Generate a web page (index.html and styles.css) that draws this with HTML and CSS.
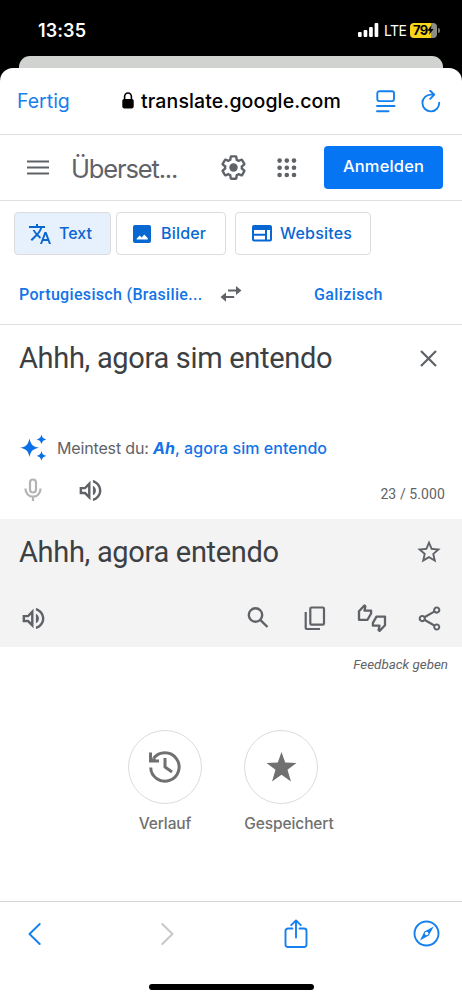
FILE: index.html
```html
<!DOCTYPE html>
<html lang="de">
<head>
<meta charset="utf-8">
<title>Google Übersetzer</title>
<link rel="stylesheet" href="styles.css">
</head>
<body>
<div class="phone">
  <header class="status">
    <span class="clock">13:35</span>
    <svg class="signal" width="21" height="14" viewBox="0 0 21 14" fill="#fff"><rect x="0" y="9" width="3.7" height="5" rx="1"/><rect x="5.6" y="7" width="3.7" height="7" rx="1"/><rect x="11.1" y="4" width="3.7" height="10" rx="1"/><rect x="16.6" y="0" width="3.7" height="14" rx="1"/></svg>
    <span class="lte">LTE</span>
    <span class="battery"><span class="level">79</span><svg class="bolt" width="7" height="10" viewBox="0 0 7 10"><path d="M4.5 0 .3 5.7h2.5L2 10l4.6-6H4z"/></svg></span>
    <i class="nub"></i>
  </header>
  <div class="behind"></div>
  <main class="sheet">
    <div class="browser">
      <span class="done">Fertig</span>
      <svg class="lock" width="12" height="17" viewBox="0 0 12 17"><rect x=".3" y="7" width="11.4" height="9.4" rx="1.8"/><path d="M2.600 8V4.700a3.400 3.700 0 0 1 6.800 0V8" fill="none" stroke="#000" stroke-width="1.600"/></svg>
      <span class="url">translate.google.com</span>
      <svg class="reader ios" width="20" height="23" viewBox="0 0 20 23"><rect x="1.300" y="1.300" width="16.700" height="9.800" rx="2"/><path d="M1 16h17.500M1 21.200h11.500"/></svg>
      <svg class="reload ios" width="20" height="23" viewBox="0 0 20 23"><path d="M18.200 12.700a8.400 8.400 0 1 1-8.400-8.100h3.500M9.200.8l4.100 3.900-4.100 4.100"/></svg>
    </div>
    <div class="google">
      <svg class="menu" width="22" height="16" viewBox="0 0 22 16"><path d="M0 1.500h22M0 7.500h22M0 13.500h22" stroke="#5f6368" stroke-width="2.200"/></svg>
      <span class="product">Überset...</span>
      <svg class="gear" width="29" height="29" viewBox="0 0 24 24" fill="#5f6368"><path d="M13.85 22.25h-3.7c-.74 0-1.36-.54-1.45-1.27l-.27-1.89c-.27-.14-.53-.29-.79-.46l-1.8.72c-.7.26-1.47-.03-1.81-.65L2.2 15.53c-.35-.66-.2-1.44.36-1.88l1.53-1.19c-.01-.15-.02-.3-.02-.46 0-.15.01-.31.02-.46l-1.52-1.19c-.59-.45-.74-1.26-.37-1.88l1.85-3.19c.34-.62 1.11-.9 1.79-.63l1.81.73c.26-.17.52-.32.78-.46l.27-1.91c.09-.7.71-1.25 1.44-1.25h3.7c.74 0 1.36.54 1.45 1.27l.27 1.89c.27.14.53.29.79.46l1.8-.72c.71-.26 1.48.03 1.82.65l1.84 3.18c.36.66.2 1.44-.36 1.88l-1.52 1.19c.01.15.02.3.02.46s-.01.31-.02.46l1.52 1.19c.56.45.72 1.23.37 1.86l-1.86 3.22c-.34.62-1.11.9-1.8.63l-1.8-.72c-.26.17-.52.32-.78.46l-.27 1.91c-.1.68-.72 1.22-1.46 1.22zm-3.23-2h2.76l.37-2.55.53-.22c.44-.18.88-.44 1.34-.78l.45-.34 2.38.96 1.38-2.4-2.03-1.58.07-.56c.03-.26.06-.51.06-.78s-.03-.53-.06-.78l-.07-.56 2.03-1.58-1.39-2.4-2.39.96-.45-.35c-.42-.32-.87-.58-1.33-.77l-.52-.22-.37-2.55h-2.76l-.37 2.55-.53.21c-.44.19-.88.44-1.34.79l-.45.33-2.38-.95-1.39 2.39 2.03 1.58-.07.56a7 7 0 0 0-.06.79c0 .26.02.53.06.78l.07.56-2.03 1.58 1.38 2.4 2.39-.96.45.35c.43.33.86.58 1.33.77l.53.22.38 2.55z"/><circle cx="12" cy="12" r="3.5"/></svg>
      <svg class="apps" width="20" height="20" viewBox="0 0 20 20" fill="#5f6368"><circle cx="2.6" cy="2.6" r="2.3"/><circle cx="9.8" cy="2.6" r="2.3"/><circle cx="17" cy="2.6" r="2.3"/><circle cx="2.6" cy="9.8" r="2.3"/><circle cx="9.8" cy="9.8" r="2.3"/><circle cx="17" cy="9.8" r="2.3"/><circle cx="2.6" cy="17" r="2.3"/><circle cx="9.8" cy="17" r="2.3"/><circle cx="17" cy="17" r="2.3"/></svg>
      <span class="login">Anmelden</span>
    </div>
    <nav class="tabs">
      <span class="tab tab-text"><svg width="24" height="24" viewBox="0 0 24 24"><path d="M12.87 15.07l-2.54-2.51.03-.03c1.74-1.94 2.98-4.17 3.71-6.53H17V4h-7V2H8v2H1v1.99h11.17C11.5 7.92 10.44 9.75 9 11.35 8.07 10.32 7.3 9.19 6.69 8h-2c.73 1.63 1.73 3.17 2.98 4.56l-5.09 5.02L4 19l5-5 3.11 3.11.76-2.04zM18.5 10h-2L12 22h2l1.12-3h4.75L21 22h2l-4.5-12zm-2.62 7l1.62-4.33L19.12 17h-3.24z"/></svg><b>Text</b></span>
      <span class="tab tab-images"><svg width="18" height="18" viewBox="0 0 18 18"><path fill-rule="evenodd" d="M2 0h14a2 2 0 0 1 2 2v14a2 2 0 0 1-2 2H2a2 2 0 0 1-2-2V2a2 2 0 0 1 2-2zM3.6 14.4h11.2v-1.2l-3.6-3.8L8.8 12.6 6.7 10.6 3.6 13.8z"/></svg><b>Bilder</b></span>
      <span class="tab tab-web"><svg width="20" height="17" viewBox="0 0 20 17"><path fill-rule="evenodd" d="M2 0h16a2 2 0 0 1 2 2v12.500a2 2 0 0 1-2 2H2a2 2 0 0 1-2-2V2a2 2 0 0 1 2-2zM2 5v3.800h11V5zM2 10.700v3.800h11v-3.800zM15 5v9.500h3V5z"/></svg><b>Websites</b></span>
    </nav>
    <div class="langs">
      <span class="from">Portugiesisch (Brasilie...</span>
      <svg class="swap" width="22" height="16" viewBox="0 0 22 16" fill="#5f6368"><path d="M16 0v3.500H8v2h8V9l5.500-4.500zM6 6.500v3.600h8.200v2H6v3.600L.5 11.100z"/></svg>
      <span class="to">Galizisch</span>
    </div>
    <section class="source">
      <div class="line"><span class="phrase phrase-src">Ahhh, agora sim entendo</span><svg class="close" width="17" height="17" viewBox="0 0 17 17"><path d="M1 1l15 15M16 1 1 16" stroke="#5f6368" stroke-width="2.200"/></svg></div>
      <div class="hint">
        <svg width="27" height="27" viewBox="0 0 27 27" fill="#0b6fe8"><path d="M9.500 4.500C10.800 10.600 12.700 12.500 19 13.800 12.700 15.100 10.800 17 9.500 23 8.200 17 6.300 15.100.3 13.800 6.300 12.500 8.200 10.600 9.500 4.500zM21.500.6c.8 3 1.700 4 4.900 4.800-3.200.8-4.100 1.700-4.900 4.900-.8-3.200-1.700-4.100-4.900-4.900C19.800 4.600 20.700 3.600 21.500.6zM21.500 17c.8 3.200 1.700 4.100 4.900 4.900-3.200.8-4.100 1.700-4.900 4.900-.8-3.200-1.700-4.100-4.900-4.900 3.200-.8 4.100-1.700 4.900-4.900z"/></svg>
        <span class="ask">Meintest du:</span><span class="suggest"><em>Ah</em>, agora sim entendo</span>
      </div>
      <div class="tools">
        <svg class="mic" width="18" height="24" viewBox="0 0 18 24" fill="none" stroke="#b1b3b5" stroke-width="2.200"><rect x="6" y="1.500" width="6" height="13" rx="3"/><path d="M1.500 10.500v.6a7.500 7.500 0 0 0 15 0v-.6M9 18.700V23"/></svg>
        <svg class="speak" width="29" height="29" viewBox="0 0 24 24" fill="#5f6368"><path d="M3 9v6h4l5 5V4L7 9H3zm7-.17v6.340L7.830 13H5v-2h2.830L10 8.830zM16.500 12c0-1.770-1.020-3.290-2.500-4.030v8.050c1.480-.73 2.500-2.250 2.500-4.020zM14 3.230v2.060c2.890.86 5 3.540 5 6.710s-2.110 5.850-5 6.710v2.060c4.010-.91 7-4.490 7-8.770 0-4.280-2.990-7.860-7-8.770z"/></svg>
        <span class="count">23 / 5.000</span>
      </div>
    </section>
    <section class="result">
      <div class="line"><span class="phrase phrase-dst">Ahhh, agora entendo</span><svg class="fav" width="28" height="28" viewBox="0 0 24 24" fill="#5f6368"><path d="M22 9.240l-7.190-.62L12 2 9.190 8.630 2 9.240l5.460 4.730L5.820 21 12 17.270 18.180 21l-1.630-7.030L22 9.240zM12 15.400l-3.760 2.270 1-4.280-3.320-2.880 4.380-.38L12 6.100l1.710 4.040 4.380.38-3.320 2.880 1 4.280L12 15.400z"/></svg></div>
      <div class="actions">
        <svg width="29" height="29" viewBox="0 0 24 24" fill="#5f6368"><path d="M3 9v6h4l5 5V4L7 9H3zm7-.17v6.340L7.830 13H5v-2h2.830L10 8.830zM16.500 12c0-1.770-1.020-3.290-2.500-4.030v8.050c1.480-.73 2.500-2.250 2.500-4.020zM14 3.230v2.060c2.890.86 5 3.540 5 6.710s-2.110 5.850-5 6.710v2.060c4.010-.91 7-4.490 7-8.770 0-4.280-2.990-7.860-7-8.770z"/></svg>
        <svg class="find" width="22" height="22" viewBox="0 0 22 22" fill="none" stroke="#5f6368" stroke-width="2.400"><circle cx="8.500" cy="8" r="6.700"/><path d="m13.200 12.800 7.300 7.200"/></svg>
        <svg class="copy" width="22" height="25" viewBox="0 0 22 25" fill="none" stroke="#5f6368" stroke-width="2.200"><rect x="6.300" y="1.500" width="13.700" height="17.200" rx="1.300"/><path d="M1.700 6v16a1 1 0 0 0 1 1H16"/></svg>
        <svg class="thumbs" width="30" height="29" viewBox="0 0 30 29" fill="none" stroke="#5f6368" stroke-width="2.300" stroke-linejoin="round"><path d="M2 7.200v8.600h8.500l3.600-6.300V6.700H7.500l.9-4.400-1-.8zM28 21.200v-8.600h-8.500l-3.600 6.300v2.800h6.600l-.9 4.400 1 .8z"/></svg>
        <svg class="share" width="29" height="29" viewBox="0 0 24 24" fill="#5f6368"><path d="M18 16.080c-.76 0-1.440.3-1.960.77L8.910 12.700c.05-.23.09-.46.09-.7s-.04-.47-.09-.7l7.050-4.110c.54.5 1.250.81 2.040.81 1.660 0 3-1.340 3-3s-1.340-3-3-3-3 1.340-3 3c0 .24.04.47.09.7L8.040 9.810C7.500 9.310 6.790 9 6 9c-1.660 0-3 1.340-3 3s1.340 3 3 3c.79 0 1.500-.31 2.040-.81l7.120 4.160c-.05.21-.08.43-.08.65 0 1.610 1.310 2.920 2.920 2.920s2.920-1.310 2.920-2.920-1.310-2.920-2.920-2.920zM18 3.700c.72 0 1.300.58 1.300 1.300s-.58 1.300-1.300 1.300-1.300-.58-1.300-1.300.58-1.300 1.300-1.300zM6 13.300c-.72 0-1.300-.58-1.300-1.300s.58-1.300 1.300-1.300 1.300.58 1.300 1.300-.58 1.300-1.300 1.300zm12 7.020c-.72 0-1.300-.58-1.300-1.300s.58-1.300 1.300-1.300 1.300.58 1.300 1.300-.58 1.300-1.300 1.300z"/></svg>
      </div>
    </section>
    <div class="feedback">Feedback geben</div>
    <div class="shortcuts">
      <div class="shortcut"><span class="disc"><svg width="34" height="34" viewBox="0 0 34 34" fill="none" stroke="#707070" stroke-width="3"><path d="M2.700 17.500A14.200 14.200 0 1 0 5.500 8.500M2.500 2.500v8.600h8.500M17 8v9l7 5"/><path d="M3 6v5h5L4 9" stroke-width="2"/></svg></span><span class="name name-history">Verlauf</span></div>
      <div class="shortcut"><span class="disc"><svg width="31" height="30" viewBox="0 0 31 30" fill="#707070"><path d="m15.500 0 3.700 10.600 11.300.4-9 6.800 3.500 11.700-9.500-6.700-9.500 6.700 3.500-11.700-9-6.800 11.300-.4z"/></svg></span><span class="name name-saved">Gespeichert</span></div>
    </div>
    <footer class="toolbar">
      <svg class="ios back" width="13" height="22" viewBox="0 0 13 22"><path d="M11.700 1 1.500 11l10.200 10"/></svg>
      <svg class="ios next" width="13" height="22" viewBox="0 0 13 22"><path d="m1.300 1 10.200 10L1.300 21"/></svg>
      <svg class="ios send" width="24" height="30" viewBox="0 0 24 30"><path d="M8.500 9.500H4a2.500 2.500 0 0 0-2.500 2.500v13.500A2.500 2.500 0 0 0 4 28h16a2.500 2.500 0 0 0 2.500-2.500V12A2.500 2.500 0 0 0 20 9.500h-4.500M12 18.500V1.500M7.200 6.200 12 1.400l4.800 4.800"/></svg>
      <svg class="ios compass" width="27" height="27" viewBox="0 0 27 27"><circle cx="13.500" cy="13.500" r="12"/><path d="M20.700 6.500 15.800 15.500l-8.800 5L11.400 11.600z" fill="#1680ee" stroke="none"/><circle cx="13.600" cy="13.500" r="1.800" fill="#fff" stroke="none"/></svg>
    </footer>
    <div class="home"></div>
  </main>
</div>
</body>
</html>
```

FILE: styles.css
```css
* { box-sizing: border-box; }
body { margin: 0; background: #000; }
svg { display: block; flex: none; }
.phone { width: 462px; height: 1000px; overflow: hidden; background: #000; font-family: Inter, sans-serif; display: flex; flex-direction: column; }
span { white-space: nowrap; flex: none; }
.status { height: 56px; flex: none; display: flex; align-items: center; padding: 4px 20px 0 38px; color: #fff; }
.clock { width: 320px; font-size: 18px; font-weight: 600; letter-spacing: .1px; }
.lte { width: 26px; font-size: 14px; letter-spacing: -.6px; margin-left: 5px; }
.battery { width: 27px; height: 15px; border-radius: 4px; background: linear-gradient(90deg, #f8d51c 78%, #8d8d86 78%); color: #000; display: flex; align-items: center; padding-left: 3px; }
.level { font-size: 13px; font-weight: 700; letter-spacing: -.7px; }
.nub { width: 2px; height: 5px; background: #777; margin-left: 1px; border-radius: 0 2px 2px 0; }
.behind { height: 24px; flex: none; margin: 0 19px -12px; border-radius: 11px 11px 0 0; background: #d1d3d1; }
.sheet { flex: 1; background: #fff; border-radius: 13px 13px 0 0; display: flex; flex-direction: column; position: relative; }
.browser { height: 67px; flex: none; display: flex; align-items: center; padding-left: 17px; border-bottom: 1px solid #dedfdf; }
.done { width: 105px; font-size: 19.500px; letter-spacing: 0; color: #1680ee; }
.lock { margin-top: -1px; }
.url { width: 235px; margin-left: 7px; font-size: 19.500px; letter-spacing: .12px; font-weight: 500; color: #000; }
.ios { fill: none; stroke: #1680ee; stroke-width: 1.900; stroke-linecap: round; stroke-linejoin: round; }
.reload { margin-left: 25px; }
.google { height: 66px; flex: none; display: flex; align-items: center; padding-left: 27px; border-bottom: 1px solid #dfe0e2; }
.product { width: 129px; margin: 1px 0 0 22px; font-size: 25.500px; letter-spacing: -1.150px; color: #5f6368; }
.gear { margin-left: 19px; }
.apps { margin-left: 29px; }
.login { width: 119px; height: 43px; margin-left: 27px; border-radius: 4px; background: #0675f3; color: #fff; font-size: 16.500px; letter-spacing: .15px; font-weight: 500; line-height: 41px; text-align: center; }
.tabs { display: flex; padding: 11px 0 0 14px; flex: none; }
.tab { height: 43px; display: flex; align-items: center; border: 1px solid #dadce0; border-radius: 4px; color: #0967d2; fill: #0967d2; font-size: 16px; }
.tab b { font-weight: 500; margin-top: -2px; }
.tab-text { width: 97px; background: #e7f0fd; padding-left: 13px; }
.tab-text b { margin-left: 7px; }
.tab-images { width: 110px; margin-left: 5px; padding-left: 16px; }
.tab-images b { margin-left: 10px; letter-spacing: .2px; }
.tab-web { width: 136px; margin-left: 9px; padding-left: 16px; }
.tab-web b { margin-left: 8px; letter-spacing: .2px; }
.langs { height: 70px; flex: none; display: flex; align-items: center; padding: 9px 0 0 19px; border-bottom: 1px solid #e0e1e3; font-family: Roboto, sans-serif; font-size: 16px; font-weight: 500; color: #1274e7; }
.from { width: 201px; letter-spacing: .33px; }
.to { margin-left: 72px; letter-spacing: .4px; }
.source { height: 194px; flex: none; }
.line { display: flex; justify-content: space-between; align-items: center; height: 66px; padding: 0 25px 0 19px; }
.phrase { font-family: Roboto, sans-serif; font-size: 29px; letter-spacing: -.310px; color: #3c4043; }
.hint { display: flex; align-items: center; height: 27px; margin-top: 43px; padding-left: 20px; font-size: 16px; }
.ask { width: 96px; margin-left: 10px; letter-spacing: -.150px; color: #5f6368; }
.suggest { color: #1274e7; font-weight: 500; letter-spacing: .05px; }
.suggest em { font-weight: 700; }
.tools { display: flex; align-items: center; height: 44px; margin-top: 7px; padding: 0 17px 0 24px; }
.speak { margin-left: 33.500px; }
.count { margin: 7px 0 0 auto; font: 14px Roboto, sans-serif; color: #5f6368; letter-spacing: .1px; }
.result { height: 128px; flex: none; background: #f3f3f3; }
.result .line { padding-right: 19px; }
.actions { display: flex; align-items: center; height: 66px; padding-left: 18.500px; }
.find { margin-left: 199.500px; }
.copy { margin-left: 35px; }
.thumbs { margin-left: 31px; }
.share { margin-left: 27.500px; }
.feedback { height: 36px; line-height: 35px; padding-right: 14px; text-align: right; font-family: Roboto, sans-serif; font-size: 13.400px; font-style: italic; color: #5f6368; }
.shortcuts { display: flex; justify-content: center; padding: 46.500px 16px 0 0; height: 218px; flex: none; }
.shortcut { width: 116px; display: flex; flex-direction: column; align-items: center; }
.disc { width: 74px; height: 74px; border: 1px solid #dadce0; border-radius: 50%; display: flex; align-items: center; justify-content: center; }
.name { margin-top: 10px; font-size: 15.500px; font-weight: 500; letter-spacing: -.1px; color: #707070; }
.name-saved { margin-left: 16px; }
.toolbar { height: 64px; flex: none; border-top: 1px solid #d5d6d8; display: flex; align-items: center; padding-left: 28px; }
.next { margin-left: 120px; stroke: #c5c7c9; }
.send { margin-left: 110px; }
.compass { margin-left: 105px; }
.home { width: 165px; height: 6px; margin: 19px auto 0; border-radius: 3px; background: #000; }
```
